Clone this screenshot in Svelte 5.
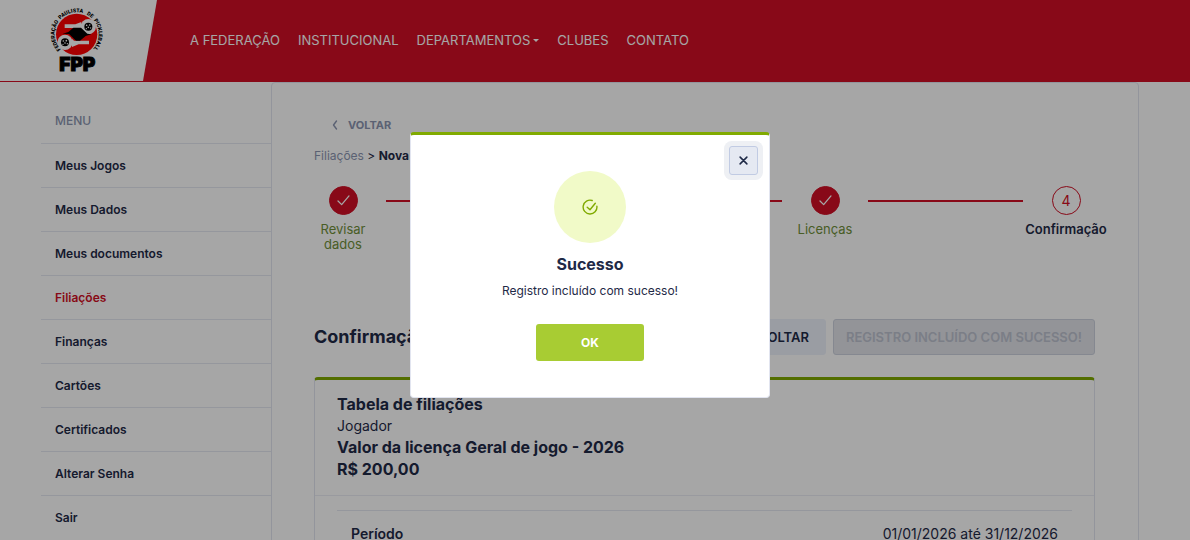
<script lang="ts">
  const navItems = [
    { label: "A FEDERAÇÃO" },
    { label: "INSTITUCIONAL" },
    { label: "DEPARTAMENTOS", dropdown: true },
    { label: "CLUBES" },
    { label: "CONTATO" },
  ];

  const menuItems = [
    "Meus Jogos",
    "Meus Dados",
    "Meus documentos",
    "Filiações",
    "Finanças",
    "Cartões",
    "Certificados",
    "Alterar Senha",
    "Sair",
  ];
  const activeItem = "Filiações";

  const steps = ["Revisar dados", "Termos", "Licenças", "Confirmação"];
  const currentStep = 3;

  let modalOpen = $state(true);

  function closeModal() {
    modalOpen = false;
  }
</script>

<header>
  <a class="brand" href="#inicio" aria-label="Federação Paulista de Pickleball">
    <svg class="logo" viewBox="141 15 180 210">
      <defs>
        <path id="ring" d="M182 148A66 66 0 1 1 278 148" />
      </defs>
      <circle cx="230" cy="103" r="62" fill="#ff0000" />
      <g fill="#fff">
        <path d="M194 73H226L244 66V92L240 84H194Z" />
        <circle cx="265" cy="80" r="23" />
        <path d="M267 133H236L216 141V116L222 122H267Z" />
        <circle cx="195" cy="127" r="23" />
      </g>
      <path d="M188 101L205 96L220 83H243L262 101L274 103L257 108L240 122H228L207 102Z" />
      <circle cx="265" cy="80" r="12" />
      <circle cx="195" cy="127" r="12" />
      <g fill="#fff">
        <circle cx="260" cy="76" r="2.5" />
        <circle cx="269" cy="75" r="2.5" />
        <circle cx="265" cy="82" r="2.5" />
        <circle cx="259" cy="86" r="2" />
        <circle cx="272" cy="84" r="2" />
        <circle cx="190" cy="123" r="2.5" />
        <circle cx="199" cy="122" r="2.5" />
        <circle cx="195" cy="129" r="2.5" />
        <circle cx="189" cy="133" r="2" />
        <circle cx="202" cy="131" r="2" />
      </g>
      <g class="ring-text">
        <text><textPath href="#ring">FEDERAÇÃO</textPath></text>
        <text><textPath href="#ring" startOffset="32%">PAULISTA</textPath></text>
        <text><textPath href="#ring" startOffset="60%">DE</textPath></text>
        <text><textPath href="#ring" startOffset="69%">PICKLEBALL</textPath></text>
      </g>
      <text class="initials" x="232" y="212" text-anchor="middle">FPP</text>
    </svg>
  </a>
  <nav>
    {#each navItems as item}
      <a href="#{item.label.toLowerCase()}">
        {item.label}{#if item.dropdown}<span class="caret"></span>{/if}
      </a>
    {/each}
  </nav>
</header>

<div class="container">
  <aside>
    <h6>MENU</h6>
    <ul>
      {#each menuItems as item}
        <li><a href="#menu" class:active={item === activeItem}>{item}</a></li>
      {/each}
    </ul>
  </aside>

  <main>
    <button class="back" type="button">
      <svg viewBox="0 0 6 10"><path d="M4.5 1L1.5 5L4.5 9" /></svg>
      VOLTAR
    </button>

    <div class="breadcrumb"><a href="#filiacoes">Filiações</a> &gt; <b>Nova vinculação</b></div>

    <ol class="steps">
      {#each steps as step, i}
        {#if i > 0}<li class="line" aria-hidden="true"></li>{/if}
        <li class="step" class:current={i === currentStep}>
          <span class="marker">
            {#if i < currentStep}
              <svg viewBox="0 0 14 12"><path d="M1 6.5L5 10.5L13 1" /></svg>
            {:else}
              {i + 1}
            {/if}
          </span>
          <span class="step-label">{step}</span>
        </li>
      {/each}
    </ol>

    <div class="title-row">
      <h2>Confirmação</h2>
      <button class="btn light" type="button">VOLTAR</button>
      <button class="btn" type="button" disabled>REGISTRO INCLUÍDO COM SUCESSO!</button>
    </div>

    <section class="card">
      <div class="card-header">
        <h3>Tabela de filiações</h3>
        <p>Jogador</p>
        <h3>Valor da licença Geral de jogo - 2026</h3>
        <h3>R$ 200,00</h3>
      </div>
      <dl>
        <div>
          <dt>Período</dt>
          <dd>01/01/2026 até 31/12/2026</dd>
        </div>
      </dl>
    </section>
  </main>
</div>

{#if modalOpen}
  <div class="backdrop">
    <div class="modal" role="dialog" aria-modal="true" aria-labelledby="modal-title">
      <button class="close" type="button" aria-label="Fechar" onclick={closeModal}>
        <svg viewBox="0 0 8 8"><path d="M1 1L7 7M7 1L1 7" /></svg>
      </button>
      <div class="status">
        <svg viewBox="0 0 16 16">
          <path d="M10.2 1.5A6.9 6.9 0 1 0 14.9 7.3" />
          <path d="M5.2 8.2L8 10.8L13.3 4.2" />
        </svg>
      </div>
      <h4 id="modal-title">Sucesso</h4>
      <p>Registro incluído com sucesso!</p>
      <button class="ok" type="button" onclick={closeModal}>OK</button>
    </div>
  </div>
{/if}

<style>
  :global(body) {
    margin: 0;
    overflow: hidden;
    background: #fff;
    color: #1f2a47;
    font-family: Inter, "Liberation Sans", sans-serif;
    font-size: 12px;
    font-optical-sizing: none;
  }

  a {
    color: inherit;
    text-decoration: none;
  }

  button {
    font-family: inherit;
    cursor: pointer;
  }

  h2,
  h3,
  h4,
  h6,
  p,
  ul,
  ol,
  dl,
  dd {
    margin: 0;
    padding: 0;
  }

  li {
    list-style: none;
  }

  header {
    display: flex;
    align-items: center;
    height: 81px;
    background: #d10f25;
    border-bottom: 1px solid #d10f25;
  }

  .brand {
    box-sizing: border-box;
    width: 157px;
    height: 81px;
    padding: 5px 0 0 47px;
    background: #fff;
    clip-path: polygon(0 0, 100% 0, 143px 100%, 0 100%);
  }

  .logo {
    display: block;
    width: 60px;
    height: 70px;
  }

  .ring-text {
    font-family: Roboto, sans-serif;
    font-size: 16px;
    font-weight: 900;
  }

  .initials {
    stroke: #000;
    stroke-width: 3;
    font-size: 57px;
    font-weight: 900;
  }

  nav {
    display: flex;
    gap: 18px;
    margin-left: 33px;
    padding-bottom: 2px;
    color: #fff;
    font-size: 13px;
  }

  .caret {
    display: inline-block;
    margin-left: 3px;
    border: 3px solid transparent;
    border-top-color: #fff;
    border-bottom: 0;
    vertical-align: 3px;
  }

  .container {
    display: flex;
    padding: 0 51px 0 41px;
  }

  aside {
    flex: 0 0 230px;
    padding-top: 17px;
  }

  h6,
  aside a {
    display: block;
    padding: 0 14px;
    font-size: 12px;
    font-weight: 600;
    line-height: 43px;
  }

  h6 {
    color: #8c96b1;
    font-weight: 500;
    line-height: 44px;
  }

  aside li {
    border-top: 1px solid #e5e8f1;
  }

  aside .active {
    color: #d10f25;
  }

  main {
    flex: 1;
    min-width: 0;
    padding: 33px 43px 42px 42px;
    border: 1px solid #e2e5f0;
    border-radius: 4px;
  }

  .back {
    display: flex;
    align-items: center;
    gap: 10px;
    padding: 0 18px;
    border: 0;
    background: none;
    color: #8c96b1;
    font-size: 11px;
    font-weight: 700;
    line-height: 18px;
  }

  .back svg {
    width: 6px;
    height: 10px;
  }

  svg path {
    stroke-linecap: round;
    stroke-linejoin: round;
  }

  .back path,
  .marker path,
  .close path,
  .status path {
    fill: none;
    stroke: currentColor;
    stroke-width: 1.4;
  }

  .breadcrumb {
    margin-top: 12px;
    line-height: 20px;
  }

  .breadcrumb a {
    color: #8c96b1;
  }

  .steps {
    display: flex;
    margin: 20px -14px 0;
  }

  .step {
    display: flex;
    flex: 0 0 86px;
    flex-direction: column;
    align-items: center;
    gap: 7px;
    min-height: 90px;
    color: #70903a;
    font-size: 13px;
    line-height: 15px;
    text-align: center;
  }

  .step-label {
    max-width: 60px;
  }

  .marker {
    display: flex;
    box-sizing: border-box;
    align-items: center;
    justify-content: center;
    width: 29px;
    height: 29px;
    border: 1px solid #d10f25;
    border-radius: 50%;
    background: #d10f25;
    color: #fff;
    font-size: 14px;
  }

  .marker svg {
    width: 13px;
    height: 11px;
  }

  .line {
    flex: 1;
    height: 2px;
    margin-top: 14px;
    background: #d10f25;
  }

  .current {
    color: #1f2a47;
    font-weight: 600;
  }

  .current .step-label {
    max-width: none;
  }

  .current .marker {
    background: none;
    color: #d10f25;
    font-weight: 400;
  }

  .title-row {
    display: flex;
    align-items: center;
    gap: 7px;
    margin-top: 43px;
  }

  h2 {
    flex: 1;
    font-size: 18px;
    font-weight: 700;
    line-height: 20px;
  }

  .btn {
    height: 36px;
    padding: 0 12px;
    border: 1px solid #e2e8f4;
    border-radius: 3px;
    background: #eaf0fa;
    color: #1f2a47;
    font-size: 13px;
    font-weight: 600;
    line-height: 16px;
  }

  .btn.light {
    padding: 0 16px;
    border-color: #edf2fb;
    background: #edf2fb;
  }

  .btn:disabled {
    border-color: #cdd2de;
    background: #e2e4ea;
    color: #bdc2cf;
  }

  .card {
    margin-top: 22px;
    border: 1px solid #e2e5f0;
    border-top: 3px solid #80aa00;
    border-radius: 4px;
  }

  .card-header {
    padding: 13px 22px 15px;
    border-bottom: 1px solid #ebedf4;
  }

  h3,
  .card-header p {
    font-size: 16px;
    font-weight: 700;
    line-height: 22px;
  }

  .card-header p {
    font-size: 14px;
    font-weight: 400;
    line-height: 21px;
  }

  dl {
    padding: 14px 22px;
    font-size: 14px;
  }

  dl div {
    display: flex;
    justify-content: space-between;
    padding: 12px 14px;
    border-top: 1px solid #e5e8f1;
    line-height: 22px;
  }

  dt {
    font-weight: 600;
  }

  .backdrop {
    position: fixed;
    inset: 0;
    display: flex;
    align-items: center;
    justify-content: center;
    padding: 0 10px 10px 0;
    background: rgba(0, 0, 0, 0.35);
  }

  .modal {
    position: relative;
    display: flex;
    box-sizing: border-box;
    flex-direction: column;
    align-items: center;
    width: 360px;
    padding: 36px 20px;
    border: 1px solid #e2e5f0;
    border-top: 3px solid #80aa00;
    border-radius: 4px;
    background: #fff;
  }

  .close {
    position: absolute;
    top: 11px;
    right: 11px;
    display: flex;
    align-items: center;
    justify-content: center;
    width: 29px;
    height: 29px;
    padding: 0;
    border: 1px solid #c1cbe3;
    border-radius: 3px;
    background: #e5e9f2;
    box-shadow: 0 0 0 5px #eef0f4;
    color: #1f2a47;
  }

  .close svg {
    width: 9px;
    height: 9px;
  }

  .status {
    display: flex;
    align-items: center;
    justify-content: center;
    width: 72px;
    height: 72px;
    border-radius: 50%;
    background: #f1fac8;
    color: #80aa00;
  }

  .status svg {
    width: 16px;
    height: 16px;
  }

  h4 {
    margin-top: 10px;
    font-size: 16px;
    line-height: 22px;
  }

  .modal p {
    margin-top: 6px;
    line-height: 20px;
  }

  .ok {
    width: 108px;
    height: 37px;
    margin-top: 23px;
    border: 0;
    border-radius: 3px;
    background: #a8cc33;
    color: #fff;
    font-size: 12px;
    font-weight: 700;
    line-height: 16px;
  }
</style>
